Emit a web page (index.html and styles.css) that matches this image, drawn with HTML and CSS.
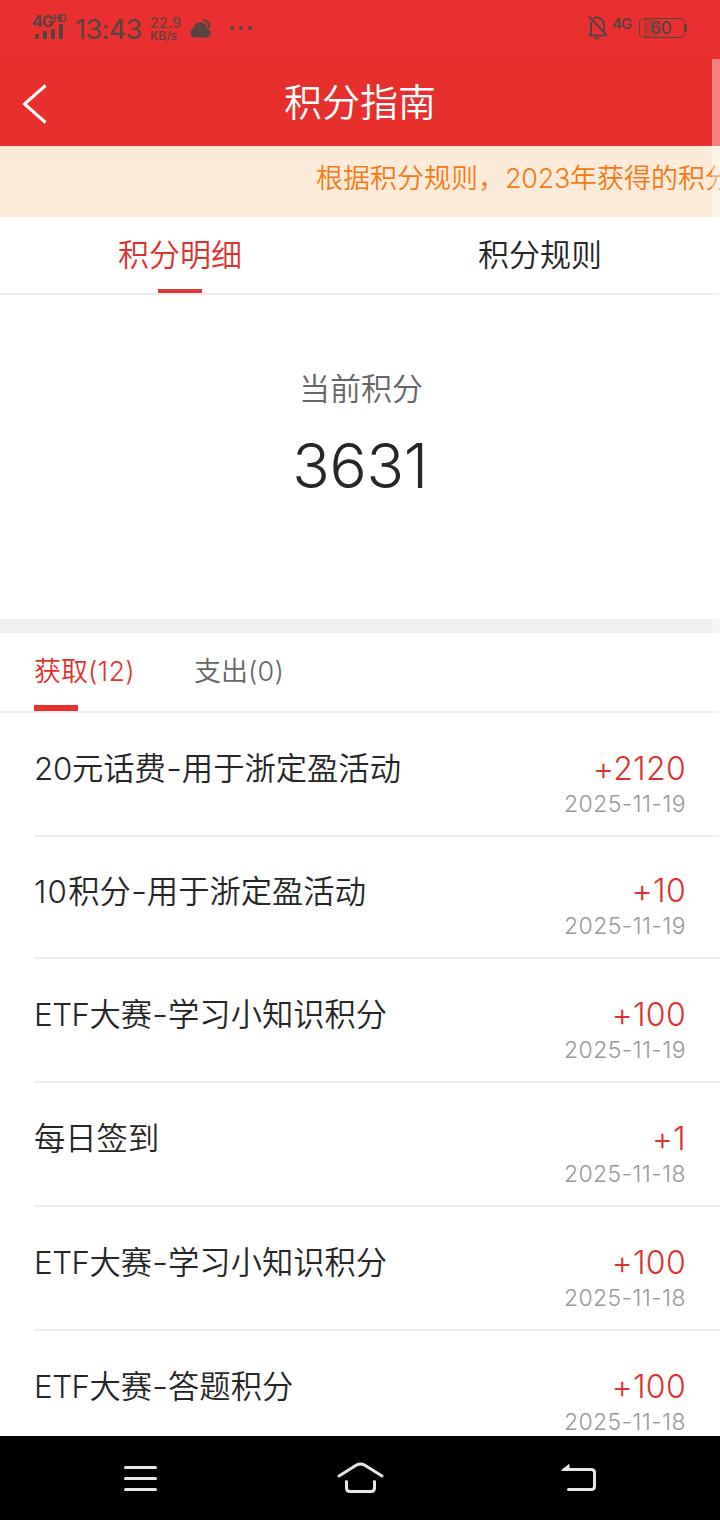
FILE: index.html
```html
<!DOCTYPE html>
<html lang="zh-CN">
<head>
<meta charset="utf-8">
<title>积分指南</title>
<link rel="stylesheet" href="styles.css">
</head>
<body>
<div class="screen">
  <div class="status">
    <div class="signal">
      <div class="net">4G<sup>HD</sup></div>
      <svg width="30" height="16" viewBox="0 0 30 16"><path d="M1 11h4v5H1zM9 8h4v8H9zM17 6h4v10h-4zM25 1h4v15h-4z"/></svg>
    </div>
    <div class="clock">13:43</div>
    <div class="speed"><span>22.9</span><span class="unit">KB/s</span></div>
    <svg class="weather" width="24" height="22" viewBox="0 0 24 22"><path d="M5 20.500a5 5 0 0 1-.5-9.300A7 7 0 0 1 16.500 7.500 7 7 0 0 1 18.500 12 4.400 4.400 0 0 1 18 20.500z"/><path d="M12 2.500A7 7 0 0 1 21 11L19.500 12A10 10 0 0 0 12 2.500z"/></svg>
    <svg class="more" width="24" height="6" viewBox="0 0 24 6"><circle cx="3" cy="3" r="2"/><circle cx="12" cy="3" r="2"/><circle cx="21" cy="3" r="2"/></svg>
    <div class="spacer"></div>
    <svg class="bell" width="20" height="26" viewBox="0 0 20 26"><path class="line" d="M0 20.500h17M3 20V7M5.500 3.500A7 7 0 0 1 16 9v7M1 1.500l18 19"/><path d="M5.500 22.500h7l-3.500 2.500z"/></svg>
    <div class="net second">4G</div>
    <div class="battery"><div class="level">60</div><i></i></div>
  </div>
  <header class="header">
    <svg class="back" width="28" height="42" viewBox="0 0 28 42"><path d="M25.500 2.500L4.500 21 25.500 39.500"/></svg>
    <h1>积分指南</h1>
  </header>
  <div class="notice"><p>根据积分规则，<span class="num">2023</span>年获得的积分</p></div>
  <nav class="tabs">
    <a class="tab active">积分明细</a>
    <a class="tab">积分规则</a>
  </nav>
  <section class="summary">
    <div class="caption">当前积分</div>
    <div class="total">3631</div>
  </section>
  <nav class="filters">
    <a class="filter active"><span>获取<span class="num">(12)</span></span></a>
    <a class="filter"><span>支出<span class="num">(0)</span></span></a>
  </nav>
  <main class="list">
    <article class="item"><h2><span class="num">20</span>元话费<b>-</b>用于浙定盈活动</h2><div class="side"><strong>+2120</strong><time>2025-11-19</time></div></article>
    <article class="item short"><h2><span class="num ten">10</span>积分<b>-</b>用于浙定盈活动</h2><div class="side"><strong>+10</strong><time>2025-11-19</time></div></article>
    <article class="item"><h2><span class="etf">ETF</span>大赛<b>-</b>学习小知识积分</h2><div class="side"><strong>+100</strong><time>2025-11-19</time></div></article>
    <article class="item"><h2>每日签到</h2><div class="side"><strong>+1</strong><time>2025-11-18</time></div></article>
    <article class="item"><h2><span class="etf">ETF</span>大赛<b>-</b>学习小知识积分</h2><div class="side"><strong>+100</strong><time>2025-11-18</time></div></article>
    <article class="item"><h2><span class="etf">ETF</span>大赛<b>-</b>答题积分</h2><div class="side"><strong>+100</strong><time>2025-11-18</time></div></article>
  </main>
  <footer class="navbar">
    <svg width="48" height="36" viewBox="0 0 48 36"><path d="M9.500 6.500h30M9.500 17.500h30M9.500 28.500h30"/></svg>
    <svg width="48" height="36" viewBox="0 0 48 36"><path d="M3 15L20.500 4Q24.500 1.800 28.500 4L46 15M10.500 20.500v6.500q0 3.500 3.500 3.500h21q3.500 0 3.500-3.500v-6.500"/></svg>
    <svg width="48" height="36" viewBox="0 0 48 36"><path d="M8 8.500h27q3.500 0 3.500 3v14q0 3-3.500 3H12.500"/><path class="tip" d="M6 9l7-5.500v5.500z"/></svg>
  </footer>
  <div class="scrollbar"></div>
</div>
</body>
</html>
```
FILE: styles.css
```css
* { box-sizing: border-box; }
body { margin: 0; font-family: "Noto Sans CJK SC", sans-serif; font-weight: 350; }
.screen { position: relative; width: 720px; height: 1520px; overflow: hidden; display: flex; flex-direction: column; background: #fff; color: #262626; }
.screen > * { flex-shrink: 0; }
h1, h2, p { margin: 0; font-weight: inherit; }

.status { height: 58px; background: #ea3030; display: flex; align-items: flex-start; padding-left: 32px; padding-right: 32px; color: #554440; font-family: Inter, sans-serif; font-weight: 400; }
.status svg { fill: #554440; }
.signal { width: 43px; padding-top: 14px; }
.signal svg { display: block; margin: -5px 0 0 2px; }
.net { font-size: 16px; line-height: 14px; height: 14px; font-weight: 700; letter-spacing: -1px; white-space: nowrap; }
.net sup { font-size: 10px; line-height: 0; vertical-align: 5px; letter-spacing: -1px; }
.clock { width: 75px; padding-top: 13px; font-size: 27px; line-height: 34px; letter-spacing: -0.6px; white-space: nowrap; }
.speed { width: 40px; padding-top: 16px; display: flex; flex-direction: column; font-size: 14px; line-height: 13px; letter-spacing: 0.4px; }
.speed .unit { font-size: 12px; letter-spacing: 0; font-weight: 500; }
.weather { margin: 17px 1px 0 -1px; }
.more { margin: 25px 0 0 15px; }
.spacer { flex: 1; }
.bell { margin: 15px -1px 0 1px; }
.bell .line { fill: none; stroke: #554440; stroke-width: 2; }
.second { width: 33px; padding: 17px 0 0 5px; font-size: 15px; letter-spacing: -1px; font-weight: 600; }
.battery { display: flex; align-items: center; margin-top: 18px; margin-left: -1px; margin-right: 1px; }
.level { width: 46px; height: 20px; border: 1px solid #554440; border-radius: 5px; font-size: 17px; line-height: 19px; padding-right: 2px; text-align: center; font-weight: 500; background: linear-gradient(90deg, transparent 4px, #b83432 4px, #cf3331 14px, transparent 24px); }
.battery i { width: 2px; height: 8px; background: #554440; border-radius: 0 2px 2px 0; }

.header { height: 88px; background: #e7302e; display: grid; grid-template-columns: 90px 1fr 90px; color: #fff; }
.back { margin: 25px 0 0 20px; fill: none; stroke: #fff; stroke-width: 3; }
.header h1 { font-size: 38px; line-height: 56px; padding-top: 14px; text-align: center; }

.notice { height: 71px; background: #fdebd9; padding: 11px 0 0 316px; overflow: hidden; color: #f47a14; }
.notice p { font-size: 27px; line-height: 40px; white-space: nowrap; }
.num { font-family: Inter, sans-serif; }
.notice .num { letter-spacing: -0.3px; }

.tabs { height: 78px; border-bottom: 2px solid #ececec; display: grid; grid-template-columns: 1fr 1fr; }
.tab { display: flex; flex-direction: column; align-items: center; justify-content: space-between; font-size: 31px; line-height: 46px; padding-top: 13px; }
.active { color: #dc3331; }
.tab.active::after { content: ""; width: 44px; height: 4px; background: #d93a38; }

.summary { height: 338px; border-bottom: 14px solid #efefef; text-align: center; padding-top: 69px; }
.caption { font-size: 31px; line-height: 46px; color: #666; padding-left: 2px; }
.total { font-family: Inter, sans-serif; font-size: 62px; line-height: 80px; margin-top: 16px; letter-spacing: -0.3px; }

.filters { height: 80px; border-bottom: 2px solid #ececec; display: flex; gap: 60px; padding-left: 34px; }
.filter { display: flex; flex-direction: column; justify-content: space-between; font-size: 27px; line-height: 40px; padding-top: 17px; color: #666; white-space: nowrap; }
.filter.active { width: 100px; color: #e23230; }
.filter.active::after { content: ""; width: 44px; height: 6px; background: #e7302e; }
.filter .num { letter-spacing: 0.2px; }

.list { height: 723px; overflow: hidden; padding-left: 34px; }
.item { height: 124px; border-bottom: 2px solid #ececec; display: flex; justify-content: space-between; padding: 32px 34px 0 0; }
.short { height: 122px; padding-top: 31px; }
.item h2 { margin-top: -1px; font-size: 31.300px; line-height: 46px; white-space: nowrap; }
.item b { display: inline-block; width: 16px; font: 300 31px/1 Inter, sans-serif; transform: scaleX(1.15); text-align: center; }
.item .num { letter-spacing: -0.3px; }
.item .ten { letter-spacing: 1.300px; }
.etf { font-family: Inter, sans-serif; letter-spacing: -0.5px; }
.side { display: flex; flex-direction: column; align-items: flex-end; font-family: Inter, sans-serif; }
.side strong { font-weight: inherit; font-size: 32px; line-height: 46px; padding-top: 1px; margin-bottom: -1px; letter-spacing: 0.3px; color: #dc3331; }
.side time { font-size: 23px; line-height: 26px; letter-spacing: 0.4px; color: #999; }
.short strong { margin-top: -1px; margin-bottom: 0; }
.short time { margin-top: -1px; }

.navbar { height: 84px; background: #000; display: flex; justify-content: space-between; padding: 25px 116px 0; }
.navbar svg { fill: none; stroke: #e6e6e6; stroke-width: 3; stroke-linecap: round; }
.navbar .tip { fill: #e6e6e6; stroke-width: 1; }
.scrollbar { position: absolute; top: 59px; right: 0; width: 8px; height: 843px; background: rgba(255, 255, 255, 0.4); }
```
